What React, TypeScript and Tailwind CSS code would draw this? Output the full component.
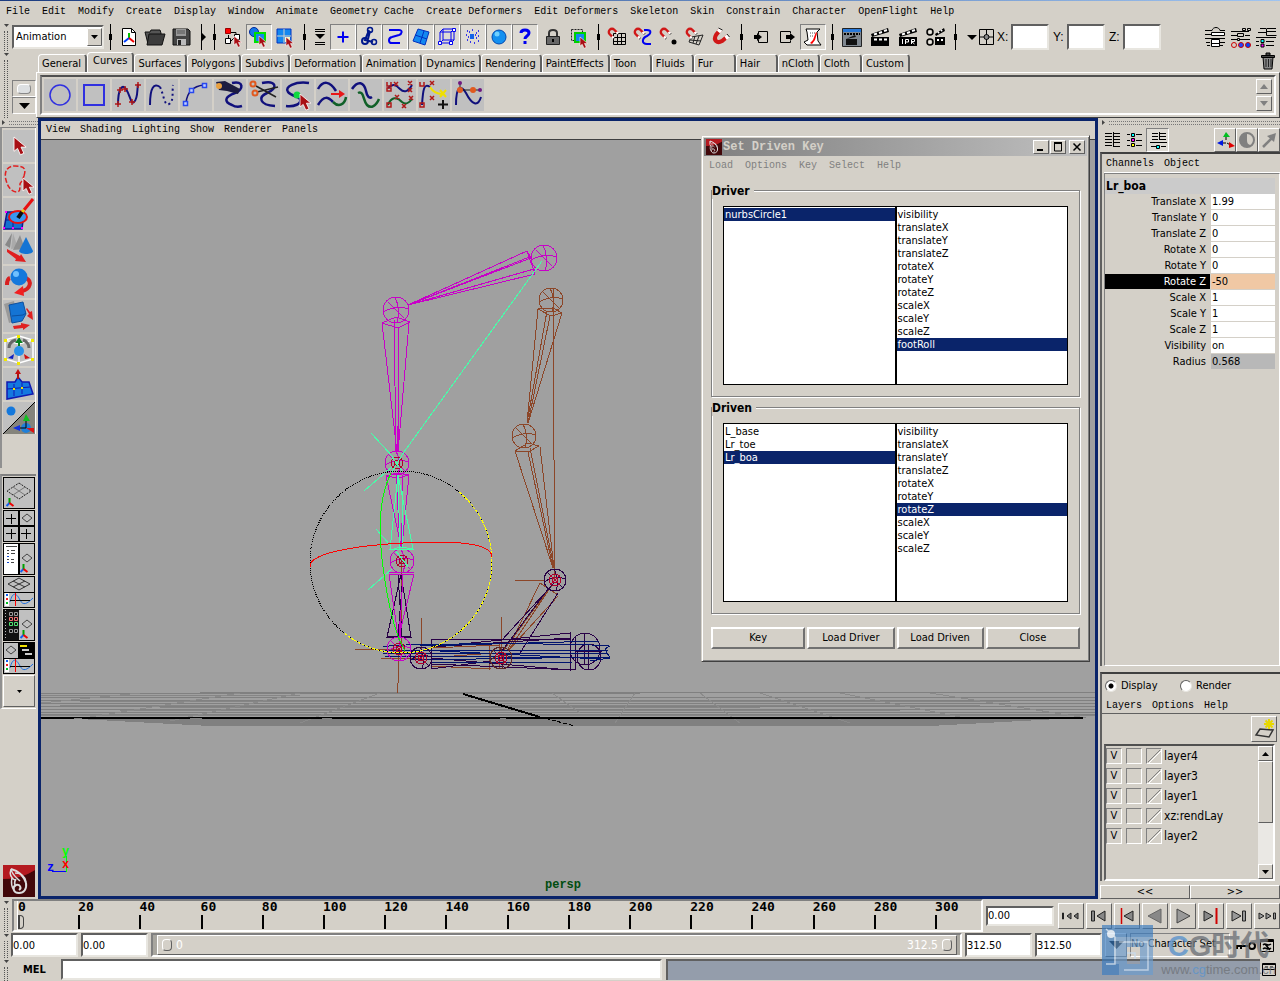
import type { ReactNode } from "react";
import clsx from "clsx";

const sunken = "border border-t-[#808080] border-l-[#808080] border-r-white border-b-white";
const raised = "border border-t-white border-l-white border-r-[#606060] border-b-[#606060]";
const field =
  "border-2 border-t-[#606060] border-l-[#606060] border-r-[#e8e6e0] border-b-[#e8e6e0] bg-white outline-none";
const mono = "font-['Liberation_Mono','DejaVu_Sans_Mono',monospace] text-[10px]";

const mainMenu = [
  "File", "Edit", "Modify", "Create", "Display", "Window", "Animate", "Geometry Cache", "Create Deformers",
  "Edit Deformers", "Skeleton", "Skin", "Constrain", "Character", "OpenFlight", "Help",
];

const shelfTabs = [
  "General", "Curves", "Surfaces", "Polygons", "Subdivs", "Deformation", "Animation", "Dynamics", "Rendering",
  "PaintEffects", "Toon", "Fluids", "Fur", "Hair", "nCloth", "Cloth", "Custom",
];

const attributes = [
  "visibility", "translateX", "translateY", "translateZ", "rotateX", "rotateY", "rotateZ", "scaleX", "scaleY", "scaleZ",
];

const channels = [
  ["Translate X", "1.99"],
  ["Translate Y", "0"],
  ["Translate Z", "0"],
  ["Rotate X", "0"],
  ["Rotate Y", "0"],
  ["Rotate Z", "-50"],
  ["Scale X", "1"],
  ["Scale Y", "1"],
  ["Scale Z", "1"],
  ["Visibility", "on"],
  ["Radius", "0.568"],
];

const layers = ["layer4", "layer3", "layer1", "xz:rendLay", "layer2"];
const frames = [0, 20, 40, 60, 80, 100, 120, 140, 160, 180, 200, 220, 240, 260, 280, 300];

/* ---------- small shared pieces ---------- */

function Svg({ size = 24, children }: { size?: number; children: ReactNode }) {
  return (
    <svg width={size} height={size} viewBox={`0 0 ${size} ${size}`} fill="none" aria-hidden="true" className="shrink-0">
      {children}
    </svg>
  );
}

function Cursor({ x, y, s = 1 }: { x: number; y: number; s?: number }) {
  return (
    <path
      transform={`translate(${x} ${y}) scale(${s})`}
      d="M0 0v13l3.2-2.6 2.6 5.8 3.2-1.4-2.6-5.6h4.6z"
      fill="#a80f14"
      stroke="#fff"
      strokeWidth=".8"
    />
  );
}

function Magnet({ x, y, s = 1 }: { x: number; y: number; s?: number }) {
  return (
    <g transform={`translate(${x} ${y}) scale(${s}) rotate(-45)`} strokeWidth="3">
      <path d="M-4 6V0a4 4 0 0 1 8 0v6" stroke="#d01818" />
      <path d="M-4 4v3M4 4v3" stroke="#fff" />
      <path d="M-5.500 7.500h3M2.500 7.500h3" stroke="#222" strokeWidth="1" />
    </g>
  );
}

function Grip() {
  return (
    <div className="flex w-3 shrink-0 flex-col items-center gap-1 self-stretch pt-0.5">
      <svg width="5" height="3" aria-hidden="true">
        <path d="M0 0h5L2.500 3z" fill="#444" />
      </svg>
      <div className="w-1 flex-1 border-x border-dotted border-[#555]" />
    </div>
  );
}

function SideGrip() {
  return (
    <div className="flex h-[9px] items-center gap-1 pl-0.5">
      <svg width="3" height="5" aria-hidden="true">
        <path d="M0 0v5l3-2.500z" fill="#444" />
      </svg>
      <div className="h-1 flex-1 border-y border-dotted border-[#777]" />
    </div>
  );
}

function Divider({ wide }: { wide?: boolean }) {
  return (
    <svg width={wide ? 14 : 12} height="26" viewBox="0 0 12 26" aria-hidden="true" className="shrink-0" shapeRendering="crispEdges">
      <path d="M6 0h1v26h-1z" />
      <path d="M5 10h3v6h-3z" />
    </svg>
  );
}

function IconButton({ label, pressed, children }: { label: string; pressed?: boolean; children: ReactNode }) {
  return (
    <button
      type="button"
      aria-label={label}
      className={clsx(
        "flex h-[26px] w-[26px] shrink-0 items-center justify-center",
        pressed && "border border-t-[#808080] border-l-[#808080] border-r-white border-b-white bg-[#dedbd4]",
      )}
    >
      <Svg>{children}</Svg>
    </button>
  );
}

function MenuBar({ items, className }: { items: string[]; className?: string }) {
  return (
    <nav className={clsx("flex items-center whitespace-nowrap", mono, className)}>
      {items.map((item) => (
        <button key={item} type="button">
          {item}
        </button>
      ))}
    </nav>
  );
}

/* ---------- status line ---------- */

const clapper = (
  <>
    <path d="M3 12h18v9H3z" fill="#000" />
    <path d="M3 9l17-6 1 4-17 5z" fill="#000" />
    <path d="M6 9.500l3-1M11 8l3-1M16 6l3-1M6 14.500h3M11 14.500h3M16 14.500h3" stroke="#fff" strokeWidth="2" />
  </>
);

function StatusLine() {
  return (
    <div className="flex h-[29px] items-center">
      <Grip />
      <select aria-label="Menu set" defaultValue="Animation" className={clsx(field, "h-6 w-[92px] appearance-none bg-[linear-gradient(#d4d0c8,#d4d0c8)] bg-[length:15px_18px] bg-right bg-no-repeat pl-0.5")}>
        <option>Animation</option>
      </select>
      <svg width="15" height="18" viewBox="0 0 15 18" aria-hidden="true" className="pointer-events-none -ml-[17px] mr-0.5 shrink-0">
        <path d="M.5 17.500V.5h14" stroke="#fff" fill="none" />
        <path d="M.5 17.500h14V.5" stroke="#606060" fill="none" />
        <path d="M4 7h7l-3.500 4z" />
      </svg>
      <Divider />
      <IconButton label="New scene">
        <path d="M5.500 3.500h9l4 4v13h-13z" fill="#fff" stroke="#000" />
        <path d="M14.500 3.500v4h4" stroke="#000" />
        <path d="M12 13V8" stroke="#00c000" strokeWidth="2" />
        <path d="M12 13l-5 4" stroke="#0040ff" strokeWidth="2" />
        <path d="M12 13l5 4" stroke="#f00000" strokeWidth="2" />
      </IconButton>
      <IconButton label="Open scene">
        <path d="M2 7h5l1-2h9l1 3v11H5z" fill="#555" stroke="#111" />
        <path d="M6 9h16l-3 11H4z" fill="#3c3c3c" stroke="#111" />
      </IconButton>
      <IconButton label="Save scene">
        <path d="M4 4h15l2 2v14H4z" fill="#444" stroke="#111" />
        <path d="M7 4h10v7H7z" fill="#999" />
        <path d="M8 14h9v6H8z" fill="#bbb" />
        <path d="M9 15h3v5H9z" fill="#222" />
        <path d="M8 6h8M8 8h8" stroke="#555" />
      </IconButton>
      <svg width="14" height="26" aria-hidden="true" className="shrink-0">
        <path d="M7.500 0v26" stroke="#000" />
        <path d="M8 9l4 4-4 4z" />
      </svg>
      <Divider />
      <IconButton label="Select by hierarchy">
        <path d="M7.500 10v6M9 7.500h6v6M10 16l4-4" stroke="#000" />
        <path d="M4.500 3.500h5v5h-5z" fill="#f00" stroke="#900" />
        <path d="M4.500 13.500h5v5h-5zM13.500 9.500h5v5h-5z" fill="#fff" stroke="#000" />
        <Cursor x={13} y={11} s={0.7} />
      </IconButton>
      <IconButton label="Select by object type" pressed>
        <circle cx="7" cy="7" r="4.500" fill="#1478e8" stroke="#00289c" />
        <path d="M8 8h10v9H8z" fill="#1488f0" stroke="#00e000" strokeWidth="2" />
        <Cursor x={12} y={11} s={0.7} />
      </IconButton>
      <IconButton label="Select by component type">
        <path d="M4 4h14v14H4z" fill="#1488f0" stroke="#0030c0" />
        <path d="M11 4v14M4 11h14" stroke="#d4d0c8" />
        <path d="M12 12h5v5h-5z" fill="#fff8c0" />
        <Cursor x={13} y={12} s={0.7} />
      </IconButton>
      <Divider />
      <svg width="20" height="26" viewBox="0 0 20 26" aria-hidden="true" className="shrink-0">
        <path d="M5 5.500h10M5 7.500h10M5 18.500h10M5 20.500h10" stroke="#000" />
        <path d="M5 10h10l-5 5z" />
      </svg>
      <IconButton label="Select handles" pressed>
        <path d="M12 6.500v11M6.500 12h11" stroke="#0000f0" strokeWidth="2" />
      </IconButton>
      <IconButton label="Select joints" pressed>
        <path d="M12 5l-4 10 8 2M13 6l-2 8" stroke="#00188c" strokeWidth="2" />
        <circle cx="13" cy="5" r="2.500" stroke="#00188c" strokeWidth="1.500" />
        <circle cx="8" cy="16" r="3" stroke="#00188c" strokeWidth="2" />
        <circle cx="17" cy="17" r="2.500" stroke="#00188c" strokeWidth="1.500" />
      </IconButton>
      <IconButton label="Select curves" pressed>
        <path d="M6 5h10c4 0 3 4 0 5l-7 2c-4 1-4 6 0 6h8" stroke="#0000f0" strokeWidth="2" />
      </IconButton>
      <IconButton label="Select surfaces" pressed>
        <path d="M9 4l11 3-4 13-12-4z" fill="#1488f0" stroke="#0030c0" />
        <path d="M15 6l-4 12M6 10l12 4" stroke="#0030c0" />
      </IconButton>
      <IconButton label="Select deformations" pressed>
        <path d="M5 7h11v11H5zM8 4h11v11H8zM5 7l3-3M16 7l3-3M5 18l3-3M16 18l3-3" stroke="#0000f0" />
        <path d="M3.500 16.500h3v3h-3zM14.500 16.500h3v3h-3zM17.500 3.500h3v3h-3z" fill="#fff" stroke="#0000f0" />
      </IconButton>
      <IconButton label="Select dynamics" pressed>
        <path d="M9 9h4v5H9z" fill="#1464e8" />
        <path d="M6 6h1M11 5h1M17 6h1M5 10h1M8 7h1M15 8h1M17 11h1M6 15h1M9 17h1M13 18h1M17 16h1M15 13h1M7 12h1M14 10h1" stroke="#0000f0" strokeWidth="1.500" />
      </IconButton>
      <IconButton label="Select rendering" pressed>
        <circle cx="12" cy="12" r="7" fill="#1490f0" stroke="#0048b0" />
        <circle cx="10" cy="9" r="2.500" fill="#70d0ff" />
      </IconButton>
      <IconButton label="Select miscellaneous" pressed>
        <path d="M8 8c0-4 8-4 8 0 0 3-4 3-4 6" stroke="#0000f0" strokeWidth="3" />
        <path d="M10.500 16h3v3h-3z" fill="#0000f0" />
      </IconButton>
      <div className="w-0.5" />
      <IconButton label="Lock selection">
        <path d="M8 11V8c0-4 8-4 8 0v3" stroke="#333" strokeWidth="2" />
        <path d="M5.500 11.500h13v8h-13z" fill="#666" stroke="#222" />
        <path d="M12 14v3" stroke="#000" strokeWidth="2" />
      </IconButton>
      <IconButton label="Highlight selection mode">
        <path d="M4.500 4.500h11v11h-11z" stroke="#222" strokeDasharray="2 1" />
        <path d="M8 8h10v9H8z" fill="#1488f0" stroke="#00d000" strokeWidth="2" />
        <Cursor x={13} y={12} s={0.7} />
      </IconButton>
      <Divider />
      <IconButton label="Snap to grids">
        <path d="M8.500 8.500h12v11h-12zM12.500 8v12M16.500 8v12M8 12.500h12M8 16.500h12" stroke="#000" />
        <Magnet x={7} y={7} s={0.8} />
      </IconButton>
      <IconButton label="Snap to curves">
        <path d="M13 5h3c5 0 4 4 0 6-5 2-6 8 0 8h4" stroke="#0000f0" strokeWidth="2" />
        <Magnet x={7} y={7} s={0.8} />
      </IconButton>
      <IconButton label="Snap to points">
        <circle cx="17" cy="17" r="2.500" fill="#000" />
        <Magnet x={7} y={7} s={0.8} />
      </IconButton>
      <IconButton label="Snap to view planes">
        <path d="M8 12l12-2-4 10-10-3zM12 11l-2 7M16 11l-3 8M7 15l11 1" stroke="#222" />
        <Magnet x={7} y={7} s={0.8} />
      </IconButton>
      <IconButton label="Make live">
        <path d="M11 5L7 10c-3 5 1 9 6 6l6-5" stroke="#d01818" strokeWidth="4" />
        <path d="M9.500 7l2-2.500M16.500 13l3-2" stroke="#fff" strokeWidth="4" />
        <path d="M9.500 3l4 2M18 9l2.500 3" stroke="#222" />
      </IconButton>
      <Divider wide />
      <IconButton label="Inputs">
        <path d="M9.500 6.500h9v11h-9V15M9.500 9V6.500" stroke="#000" />
        <path d="M5 10h3V8l5 4-5 4v-2H5z" fill="#000" />
      </IconButton>
      <IconButton label="Outputs">
        <path d="M15.500 8V6.500h-10v11h10V16" stroke="#000" />
        <path d="M11 10h4V8l5 4-5 4v-2h-4z" fill="#000" />
      </IconButton>
      <IconButton label="Construction history" pressed>
        <path d="M5 4h14l-3 3 1 9 3 4H6l-3-3 4-2-1-8z" fill="#fff" stroke="#000" />
        <path d="M9 8h5M9 11h4" stroke="#555" strokeDasharray="1 1" />
        <path d="M9 18l3-3 3-8 1 1-2 7-3 4z" fill="#f00" />
      </IconButton>
      <Divider />
      <div className="flex gap-0.5 pl-px">
        <IconButton label="Render view">
          <path d="M2.500 3.500h19v18h-19z" fill="#808890" stroke="#222" />
          <path d="M3 4h18v3H3z" fill="#2878d8" />
          <path d="M4 9h16" stroke="#000" strokeWidth="2" strokeDasharray="2 1" />
          <path d="M6 14h11v6H6zM6 14l9-4 1 2z" fill="#111" />
        </IconButton>
        <IconButton label="Render current frame">{clapper}</IconButton>
        <IconButton label="IPR render">
          <path d="M3 9l17-6 1 4-17 5z" fill="#000" />
          <path d="M3 12h18v9H3z" fill="#000" />
          <path d="M6 9.500l3-1M11 8l3-1M16 6l3-1" stroke="#fff" strokeWidth="2" />
          <path d="M6.500 14v5M9.500 19v-4.500h3v2.500h-3M15.500 19v-4.500h3v2h-3l3 2.500" stroke="#fff" />
        </IconButton>
        <IconButton label="Render settings">
          <circle cx="6" cy="7" r="3" stroke="#000" strokeWidth="1.500" />
          <circle cx="6" cy="17" r="3" stroke="#000" strokeWidth="1.500" />
          <path d="M11 12h10v8H11zM11 9l9-6 1 3-9 5z" fill="#000" />
          <path d="M5.500 7h1M5.500 17h1M13 15h2M17 15h2M14 8l1-1M17 6l1-1" stroke="#fff" strokeWidth="2" />
        </IconButton>
      </div>
      <Divider />
      <svg width="36" height="26" viewBox="0 0 36 26" aria-hidden="true" className="shrink-0">
        <path d="M6 11h10l-5 5z" />
        <path d="M18.500 5.500h14v15h-14zM25.500 6v14M19 13h13" stroke="#000" fill="none" />
        <circle cx="25.500" cy="13" r="2.500" fill="#888" stroke="#000" />
      </svg>
      {["X", "Y", "Z"].map((axis) => (
        <label key={axis} className="flex w-14 shrink-0 items-center">
          <span className="w-3.5 font-['Liberation_Sans',sans-serif] text-[12px]">{axis}:</span>
          <input className={clsx(field, "h-[26px] w-[38px]")} />
        </label>
      ))}
      <div className="ml-auto flex">
        <IconButton label="Attribute editor">
          <path d="M2 5.500h7M17 5.500h5M2 9.500h6M2 13.500h20M3 17.500h4M17 17.500h5M4 20.500h3M17 20.500h3" stroke="#000" />
          <path d="M9 5.500c1-4 7-4 8 0" stroke="#000" />
          <path d="M8.500 7.500h13v3h-13zM8.500 14.500h8v7h-8zM9 18.500h7" stroke="#000" fill="#fff" />
        </IconButton>
        <IconButton label="Tool settings">
          <path d="M13.500 3.500h3v2h-3zM18.500 3.500h3v2h-3zM8.500 8.500h6v3h-6zM2 10.500h6M16 10.500h5M2 6.500h18M8.500 13.500h2v2h-2zM2 14.500h6M11 14.500h10" stroke="#000" />
          <circle cx="5" cy="20" r="2.500" stroke="#c00" />
          <circle cx="12" cy="20" r="2.500" stroke="#c00" fill="#24f" />
          <circle cx="19" cy="20" r="2.500" stroke="#c00" fill="#04f" />
        </IconButton>
        <IconButton label="Channel box">
          <path d="M5 3.500h6M3 7.500h8M11.500 3.500v7h10M12 3.500h9M12 6.500h9M1 12.500h20M11 16.500h8M11 20.500h8M1 16.500h3M1 20.500h3" stroke="#000" />
          <path d="M6 14.500h3v3H6z" fill="#0ff" stroke="#000" />
          <path d="M6 19h3v3H6z" fill="#f0f" stroke="#000" />
        </IconButton>
      </div>
    </div>
  );
}

/* ---------- shelf ---------- */

const navy = "#10107c";

const shelfItems: [string, ReactNode][] = [
  ["NURBS circle", <circle cx="16" cy="16" r="10" stroke="#3030e0" strokeWidth="1.500" />],
  ["NURBS square", <path d="M6 6h20v20H6z" stroke="#3030e0" strokeWidth="2" />],
  [
    "EP curve",
    <>
      <path d="M6 26C6 10 10 4 14 10c4 6 5 16 8 13 4-3 3-12 4-18" stroke={navy} strokeWidth="2" />
      <path d="M3 25h6M6 22v6M5 11h6M8 8v6M17 23h6M20 20v6M23 6h6M26 3v6M10 10h6M13 7v6" stroke="#b01818" strokeWidth="1.500" />
    </>,
  ],
  [
    "Pencil curve",
    <>
      <path d="M4 26C4 8 8 4 14 8" stroke={navy} strokeWidth="2" />
      <path d="M14 8c4 8 4 19 9 17 5-2 3-12 4-19" stroke={navy} strokeWidth="2" strokeDasharray="2 3" />
    </>,
  ],
  [
    "Arc tool",
    <>
      <path d="M6 24c1-11 8-17 18-18" stroke={navy} strokeWidth="1.500" />
      <path d="M3.500 22.500h4v4h-4zM9.500 9.500h4v4h-4zM22.500 4.500h4v4h-4z" fill="#c0d0ff" stroke="#2848f0" strokeWidth="1.500" />
    </>,
  ],
  [
    "Attach curves",
    <>
      <path d="M18 4c12-3 12 7 3 10-11 4-11 9-3 12 3 2 7 2 10 1" stroke={navy} strokeWidth="2.500" />
      <path d="M2 3l9-1 15 8-2 5-11-3-8-1z" fill="#1c1c40" />
      <circle cx="5" cy="7" r="3" fill="#e8a040" />
    </>,
  ],
  [
    "Cut curve",
    <>
      <path d="M14 4c14-3 17 5 5 10-9 4-8 12 8 13" stroke={navy} strokeWidth="2.500" />
      <path d="M8 7l20 11M9 13l21-5" stroke="#222" strokeWidth="1.500" />
      <circle cx="5" cy="5" r="2.500" stroke="#e05a20" strokeWidth="2" />
      <circle cx="7" cy="14" r="2.500" stroke="#e05a20" strokeWidth="2" />
    </>,
  ],
  [
    "Insert knot",
    <>
      <path d="M27 4c-14-2-25 4-21 9 3 4 10 4 12 7 2 5-6 8-14 7" stroke={navy} strokeWidth="2.500" />
      <circle cx="15" cy="16" r="3.500" fill="#10d840" />
      <Cursor x={18} y={15} s={1} />
    </>,
  ],
  [
    "Extend curve",
    <>
      <path d="M2 10c5-9 12-8 18 2M2 26c6-10 10-8 15-3" stroke={navy} strokeWidth="2.500" />
      <path d="M17 23c6 6 12 2 13-5" stroke="#106028" strokeWidth="2.500" />
      <path d="M15 14h8v-3l6 4-6 4v-3h-8z" fill="#e81818" />
    </>,
  ],
  [
    "Offset curve",
    <>
      <path d="M2 10C8 1 14 3 16 12c1 5 3 8 6 6" stroke={navy} strokeWidth="2.500" />
      <path d="M8 14c6-3 5 8 9 12 4 4 9 1 12-6" stroke="#106028" strokeWidth="2.500" />
    </>,
  ],
  [
    "Rebuild curve",
    <>
      <path d="M4 9c5-5 8-3 12 1s8 3 12-4" stroke={navy} strokeWidth="2" />
      <path d="M4 26c3-8 9-9 14-3 4 3 7 1 10-3" stroke="#106028" strokeWidth="2" />
      <path d="M3 3v4h4V3M3 9h4v3H3zM3 24h4v4H3zM10 3l4 4M14 3l-4 4M24 2l4 4M28 2l-4 4M24 9l4 4M28 9l-4 4M11 16l4 4M15 16l-4 4M25 17l4 4M29 17l-4 4M18 25l4 4M22 25l-4 4" stroke="#b01818" strokeWidth="1.500" />
    </>,
  ],
  [
    "Add points",
    <>
      <path d="M4 26C5 10 6 4 12 8" stroke={navy} strokeWidth="2" />
      <path d="M12 8c3 5 7 7 12 7" stroke="#f0e000" strokeWidth="2" />
      <path d="M2 3v4h4V3M2 24h4v4H2zM12 2l4 4M16 2l-4 4M12 17l4 4M16 17l-4 4" stroke="#b01818" strokeWidth="1.500" />
      <path d="M22 11l6 7M28 11l-6 7" stroke="#f0e000" strokeWidth="2" />
      <path d="M25 21v9M20 25.500h10" stroke="#111" strokeWidth="2" />
    </>,
  ],
  [
    "Curve editing",
    <>
      <path d="M4 26C4 6 9 6 14 14c6 12 12 14 15 4" stroke={navy} strokeWidth="2" />
      <path d="M8 11V4M8 11h20" stroke="#222" />
      <circle cx="8" cy="11" r="3" fill="#e05a20" />
      <circle cx="21" cy="11" r="3" fill="#e05a20" />
      <circle cx="8" cy="4" r="2" fill="#701880" />
      <circle cx="28" cy="11" r="2" fill="#701880" />
    </>,
  ],
];

function Shelf() {
  return (
    <div className="flex">
      <Grip />
      <div className="flex w-6 shrink-0 flex-col pt-[29px]">
        <button type="button" aria-label="Shelf tabs" className={clsx(sunken, "flex h-[17px] items-center justify-center")}>
          <span className="h-2.5 w-3.5 rounded-sm border border-[#888] border-t-white border-l-white bg-[#dde0e2]" />
        </button>
        <button type="button" aria-label="Shelf menu" className={clsx(sunken, "flex h-[17px] items-center justify-center")}>
          <svg width="11" height="6" aria-hidden="true">
            <path d="M0 0h11L5.500 6z" />
          </svg>
        </button>
      </div>
      <div className="min-w-0 flex-1">
        <div className="flex h-[21px] items-end pl-0.5">
          {shelfTabs.map((tab) => (
            <button
              key={tab}
              type="button"
              className={clsx(
                "min-w-[42px] rounded-t-sm border-t border-r-2 border-l border-t-white border-r-[#606060] border-l-white text-left",
                tab === "Curves" ? "h-5 px-[5px] pb-1" : "h-[18px] pr-1 pl-[3px]",
              )}
            >
              {tab}
            </button>
          ))}
          <button type="button" aria-label="Delete shelf item" className="mr-1 mb-0.5 ml-auto">
            <svg width="16" height="18" viewBox="0 0 16 18" fill="none" aria-hidden="true">
              <path d="M3 5h10l-1 12H4z" fill="#888" stroke="#000" />
              <path d="M1.500 3.500h13v2h-13zM6 3V1h4v2" fill="#444" stroke="#000" />
              <path d="M6 7v8M8.500 7v8M11 7v8" stroke="#222" />
            </svg>
          </button>
        </div>
        <div className="border border-t-white border-r-[#404040] border-b-[#404040] border-l-white px-[3px] py-0.5">
          <div className="flex border-2 border-t-[#505050] border-r-white border-b-white border-l-[#808080] px-0.5 pt-0.5 pb-0.5">
            <div className="flex flex-1 gap-0.5">
              {shelfItems.map(([name, art]) => (
                <button key={name} type="button" aria-label={name} className="h-8 w-8 bg-[#c0c0c0]">
                  <Svg size={32}>{art}</Svg>
                </button>
              ))}
            </div>
            <div className="flex flex-col justify-between">
              {["Scroll up", "Scroll down"].map((name, i) => (
                <button key={name} type="button" aria-label={name} className={clsx(raised, "flex h-[15px] w-4 items-center justify-center")}>
                  <svg width="8" height="5" aria-hidden="true">
                    <path d={i ? "M0 0h8L4 5z" : "M0 5h8L4 0z"} fill="#808080" />
                  </svg>
                </button>
              ))}
            </div>
          </div>
        </div>
      </div>
    </div>
  );
}

/* ---------- toolbox ---------- */

const plane = "M15 5l12 8-12 8L3 13z";

const tools: [string, ReactNode][] = [
  ["Select tool", <Cursor x={11} y={7} s={1.1} />],
  [
    "Lasso tool",
    <>
      <path d="M21 12c3-9-2-10-9-10C3 2 1 9 3 16c2 8 6 12 11 12 6-1 0-7 5-11z" stroke="#e02020" strokeWidth="1.500" strokeDasharray="5 2" />
      <Cursor x={20} y={14} s={1} />
    </>,
  ],
  [
    "Paint selection tool",
    <>
      <path d="M4 14h17l-2 17H1z" fill="#1470d0" stroke="#101890" strokeWidth="1.500" />
      <path d="M10 22v9M2 22h17" stroke="#101890" />
      <ellipse cx="15" cy="19" rx="9" ry="6" stroke="#e81010" strokeWidth="2" fill="#3898f0" />
      <path d="M30 1l-9 11" stroke="#e81010" strokeWidth="3" />
      <path d="M21 12l-2 2" stroke="#f0d000" strokeWidth="3" />
      <path d="M19 14l-4 6" stroke="#111" strokeWidth="4" />
      <path d="M0 29h2v2H0zM9 29h2v2H9zM18 29h2v2h-2zM2 13h2v2H2z" fill="#f0f" />
    </>,
  ],
  [
    "Move tool",
    <>
      <path d="M9 1L2 13l5 3z" fill="#888" />
      <path d="M10 1l5 15-7 1z" fill="#aaa" />
      <path d="M17 3l5 14-12 1z" fill="#909090" />
      <path d="M23 5l7 14c0 4-13 4-14 0z" fill="#1474d4" />
      <path d="M4 17l13 7 1-2 5 8-11-1 1-2L4 20z" fill="#e02020" />
    </>,
  ],
  [
    "Rotate tool",
    <>
      <path d="M7 12c-3 1-3 4-3 7M23 12c6 3 5 11-4 13" stroke="#d82020" strokeWidth="4" />
      <path d="M20 20l-9 7 10 3z" fill="#f02020" />
      <circle cx="16" cy="11" r="8.500" fill="#1478dc" />
      <circle cx="13" cy="8" r="3" fill="#70c0ff" />
    </>,
  ],
  [
    "Scale tool",
    <>
      <path d="M1 4l10-3 3 19-8 3z" fill="#999" />
      <path d="M6 5l14-3 3 12-4 7-10 2z" fill="#1474d4" stroke="#0c50a0" />
      <path d="M9 16l11-1 3-2" stroke="#0c50a0" />
      <path d="M24 8l3 4 2-1 1 9-6-4 2-2-3-5zM10 26l8-1v-2l9 2-7 5v-2l-9 1z" fill="#e02020" />
    </>,
  ],
  [
    "Universal manipulator",
    <>
      <path d="M2 6l14-4 14 4v19l-14 4-14-4zM16 2v27M2 6l14 4 14-4" stroke="#fff" strokeWidth="1.500" />
      <path d="M6 14c0-4 3-7 7-8M26 14c0-4-3-7-6-8" stroke="#666" strokeWidth="3" />
      <circle cx="16" cy="17" r="5" fill="#2890e8" />
      <path d="M16 12V5l-2 3h4l-2-3" stroke="#088020" strokeWidth="2" />
      <path d="M11 20l-6 4 5 1z" fill="#1020c0" />
      <path d="M21 20l6 4-5 1z" fill="#d01010" />
      <path d="M1 5h3v3H1zM14 1h3v3h-3zM28 5h3v3h-3zM1 24h3v3H1zM14 28h3v3h-3zM28 24h3v3h-3z" fill="#f0e800" />
    </>,
  ],
  [
    "Soft modification tool",
    <>
      <path d="M4 14h8l3-5 4 5h7l4 12-26 5z" fill="#1478e0" stroke="#1018b0" strokeWidth="1.500" />
      <path d="M11 16v12M19 15v11M4 21l23-2" stroke="#1018b0" />
      <path d="M15 11V5" stroke="#b01010" strokeWidth="2" />
      <path d="M12 6l3-5 3 5z" fill="#c01010" />
      <path d="M10 20h2v2h-2zM18 19h2v2h-2z" fill="#f0e800" />
    </>,
  ],
  [
    "Show manipulator",
    <>
      <path d="M32 0v32H0z" fill="#85847c" />
      <path d="M32 0L0 32" stroke="#000" />
      <circle cx="8" cy="9" r="4.500" fill="#1478dc" />
      <circle cx="23" cy="26" r="5" fill="#2080d8" />
      <path d="M23 26V14M23 26H13" stroke="#000" />
      <path d="M20 19l3-7 4 7z" fill="#10c020" />
      <path d="M17 23v6l-7-3z" fill="#1030e0" />
      <path d="M23 26l8 5v-5z" fill="#e01010" />
    </>,
  ],
];

const axes = (
  <>
    <path d="M5.500 26v-6" stroke="#00a000" strokeWidth="2" />
    <path d="M5.500 25l-3 3" stroke="#1060f0" strokeWidth="2" />
    <path d="M5.500 25l4 3" stroke="#f00000" strokeWidth="2" />
  </>
);

const graph = (
  <>
    <path d="M1 16h4v13H1z" fill="#fff" />
    <path d="M2 18h2" stroke="#1060f0" strokeWidth="2" />
    <path d="M2 22h2" stroke="#f02020" strokeWidth="2" />
    <path d="M2 26h2" stroke="#00c020" strokeWidth="2" />
    <path d="M6 25c3-12 7-8 10-2s7 4 13-2" stroke="#2070e0" />
    <path d="M6 23.500h20" stroke="#000" />
    <path d="M11.500 16v13" stroke="#f00" />
    <path d="M0 15.500h30" stroke="#000" />
  </>
);

const layouts: [string, ReactNode][] = [
  [
    "Single perspective view",
    <>
      <path d={plane} stroke="#222" strokeDasharray="2 1" />
      <path d="M9 9l12 8M21 9L9 17" stroke="#777" />
      {axes}
    </>,
  ],
  [
    "Four view",
    <>
      <path d="M15 0v30M0 15h30" stroke="#000" strokeWidth="2" />
      <path d="M7.500 3v10M2 7.500h10M7.500 18v10M2 22.500h10M22.500 18v10M17 22.500h10" stroke="#000" />
      <path d="M23 3l5 4-5 4-5-4z" stroke="#444" />
    </>,
  ],
  [
    "Outliner and perspective",
    <>
      <path d="M0 0h14v30H0z" fill="#fff" />
      <path d="M15 0v30" stroke="#000" strokeWidth="2" />
      <path d="M2 2.500h11M3 6.500h2M7 6.500h4M3 9.500h2M7 9.500h4M3 15.500h2M7 15.500h3M7 18.500h3" stroke="#444" />
      <path d="M3 12.500h2M3 18.500h2" stroke="#1048d0" />
      <path d="M23 10l5 4-5 4-5-4z" stroke="#444" />
      <g transform="translate(14 0)">{axes}</g>
    </>,
  ],
  [
    "Perspective and graph editor",
    <>
      <path d="M15 1l11 6-11 6L4 7zM9 4l12 6M21 4L9 10" stroke="#333" />
      {graph}
    </>,
  ],
  [
    "Hypershade and perspective",
    <>
      <path d="M0 0h15v30H0z" fill="#111" />
      <path d="M1.500 0v30" stroke="#bbb" strokeDasharray="1 2" />
      <path d="M5.500 2.500h3v3h-3zM10.500 2.500h3v3h-3zM5.500 19.500h3v3h-3zM10.500 19.500h3v3h-3z" stroke="#999" />
      <path d="M5.500 7.500h3v3h-3zM10.500 7.500h3v3h-3z" stroke="#f07070" />
      <path d="M5.500 12.500h3v3h-3zM10.500 12.500h3v3h-3z" stroke="#50e070" />
      <path d="M23 10l5 4-5 4-5-4z" stroke="#444" />
      <g transform="translate(14 0)">{axes}</g>
    </>,
  ],
  [
    "Perspective, hypergraph and graph editor",
    <>
      <path d="M7 3l5 4-5 4-5-4z" stroke="#444" />
      <path d="M14 0h16v15H14z" fill="#000" />
      <path d="M16 3h7" stroke="#f0e000" strokeWidth="2" />
      <path d="M18 7h7M21 11h7" stroke="#ccc" strokeWidth="2" />
      {graph}
    </>,
  ],
];

function MayaLogo({ size }: { size: number }) {
  return (
    <svg width={size} height={size} viewBox="0 0 32 32" fill="none" aria-hidden="true" className="shrink-0">
      <path d="M0 0h32v32H0z" fill="#8c1014" />
      <path d="M0 14Q18 14 32 5v27H0z" fill="#42080a" />
      <path d="M0 0h32v5Q18 14 0 14z" fill="#b41a20" />
      <path d="M8 4c8 2 13 8 15 14 1 6-2 10-7 10-6 0-7-6-3-8 4-1 6 3 3 5" stroke="#ddd" strokeWidth="2" />
      <path d="M8 4c-2 6 0 9 4 11M8 4c1 6 5 8 9 12M12 8c8 0 10 4 11 9M9 12c-1 6-1 10 2 13M13 14c-2 3-2 4-1 6" stroke="#ddd" strokeWidth="1.500" />
    </svg>
  );
}

function Toolbox() {
  return (
    <aside className="flex w-[38px] shrink-0 flex-col pb-0.5">
      <SideGrip />
      <div className="mr-0.5 border-t border-l-2 border-t-[#808080] border-l-[#909090] pb-[34px]">
        <div className="flex flex-col gap-0.5 border-r border-white pt-0.5 pl-px">
          {tools.map(([name, art]) => (
            <button key={name} type="button" aria-label={name} className="h-8 w-8 bg-[#c0c0c0]">
              <Svg size={32}>{art}</Svg>
            </button>
          ))}
        </div>
      </div>
      <div className="mt-[6px] mr-0.5 flex flex-col gap-px border-t-2 border-b border-l-2 border-t-[#808080] border-b-white border-l-[#909090] py-px pl-px">
        {layouts.map(([name, art]) => (
          <button key={name} type="button" aria-label={name} className="h-8 w-8 border border-black bg-[#c0c0c0]">
            <Svg size={30}>{art}</Svg>
          </button>
        ))}
        <button type="button" aria-label="More layouts" className={clsx(raised, "flex h-8 w-8 items-center justify-center")}>
          <svg width="5" height="3" aria-hidden="true">
            <path d="M0 0h5L2.500 3z" />
          </svg>
        </button>
      </div>
      <div className="mt-auto pl-[3px]">
        <MayaLogo size={32} />
      </div>
    </aside>
  );
}

/* ---------- viewport ---------- */

function Joint({ x, y, r, color, core }: { x: number; y: number; r: number; color: string; core?: boolean }) {
  return (
    <g stroke={color}>
      <circle cx={x} cy={y} r={r} />
      <path d={`M${x - r} ${y + 2}Q${x} ${y - 5} ${x + r} ${y - 1}M${x - 1} ${y - r}Q${x + 5} ${y} ${x + 1} ${y + r}M${x - 8} ${y - 8}L${x + 8} ${y + 8}`} />
      {core && (
        <g stroke="#b0002c">
          <circle cx={x} cy={y} r="6" />
          <circle cx={x} cy={y} r="3" />
          <path d={`M${x - 4} ${y - 4}l8 8M${x + 4} ${y - 4}l-8 8`} />
        </g>
      )}
    </g>
  );
}

function Scene() {
  return (
    <svg
      viewBox="41 139 1054 757"
      preserveAspectRatio="xMinYMin slice"
      fill="none"
      shapeRendering="crispEdges"
      role="img"
      aria-label="Leg rig in the perspective view"
      className="absolute inset-0 h-full w-full"
    >
      {/* ground grid */}
      <path d="M41 716H1095L930 725H210z" fill="#808080" />
      <path
        d="M41 692.500H640M200 691.500H1095M41 696.500H1095M41 699.500H1095M41 702.500H1095M41 705.500H1095M41 708.500H1095M41 711.500H1095M41 713.500H1095"
        stroke="#808080"
      />
      <path d="M41 714.500H1095M60 704.500H420M500 704.500H980M120 709.500H900M80 700.500H560M600 700.500H1010M160 706.500H760M41 694.500H300" stroke="#858585" />
      <path d="M140 692L41 702M240 692L90 716M300 692L170 720M380 692l-80 30M635 692l-20 30M700 692l40 30M760 692l90 30M840 692l120 24M930 692l150 24M552 692l28 20" stroke="#8a8a8a" />
      <path d="M41 716.500H1083" stroke="#000" strokeWidth="2" />
      <path d="M74 717h8M190 717h12M322 717h10M500 717h6" stroke="#808080" />
      <path d="M463 693l77 23" stroke="#000" strokeWidth="2" />
      <path d="M540 716l35 9" stroke="#000" strokeDasharray="4 2" />

      {/* inverse kinematics leg */}
      <g stroke="#8c4628">
        <Joint x={551} y={299} r={12} color="#8c4628" />
        <Joint x={524} y={435} r={12} color="#8c4628" />
        <path d="M538 308l13 7 11-3-9-5zM538 308l-11 114M547 310l-20 112M550 315l-22 107M562 312l-34 110M553 288v50l2 240" />
        <path d="M515 450l13 1 11-6-11-3zM515 450l38 117M528 451l25 116M530 447l24 120M540 446l14 121" />
        <path d="M515 579.500h30M540 582l18 12M540 582l-32 66M558 595l-50 55M552 584l-44 66M549 588l-46 62" />
        <path d="M421.500 617v40M501.500 616v40M355 648.500h44M381 657.500h40M398 650v32l-1 10M401 560v86" />
        <path d="M431 647l68-3v24M431 665l60 3M489 645v24M440 656l55-4" />
      </g>

      {/* foot bones */}
      <g stroke="#280046">
        <path d="M432 646l138-14v37l-139-12M575 635v34M570 638h-139v30l60-8M431 668v-22l139-9M575 669l-143-6" />
        <path d="M501 640l53-58M520 652l38-60M548 588l-46 62" />
        <ellipse cx="585" cy="648" rx="15" ry="16" />
        <ellipse cx="589" cy="656" rx="12" ry="13" />
        <path d="M584.500 632v31M588.500 644v25M575 650h27" strokeWidth="1.500" />
        <path d="M401 573l-14 63h24zM403 573l-5 62M398 573l4 62" />
        <path d="M387 636h24" strokeWidth="2" />
      </g>
      <g stroke="#00146e">
        <path d="M383 646c10-4 190-4 226-1M385 649l223 1M383 652h225M385 655l224 2M410 659l199-3M432 662l140-1M440 650l160 8M420 645l180-5" />
        <path d="M610 645l-5 3 5 9-20 3" />
      </g>
      <Joint x={421} y={657} r={11} color="#280046" core />
      <Joint x={501} y={657} r={11} color="#5a2828" core />
      <Joint x={555} y={579} r={11} color="#280046" core />

      {/* forward kinematics leg */}
      <g stroke="#c800c8">
        <path d="M408 304l119-54 4 7zM408 304l126-36 1 5zM527 250l8 23M408 304l124-49" />
        <path d="M382 322l14-6 14 5-12 6zM382 322l15 129M394 317l2 134M398 327v124M409 322l-11 129" />
        <path d="M386 475l11-3 12 2-11 3zM386 475l15 70M396 473l4 72M402 474v71M409 474l-7 71" />
        <path d="M389 573h25M389 573l9 62M414 573l-15 62M389 571h25M403 573l-4 72" />
        <path d="M397.500 425v26M401.500 522v24M399.500 620v16" strokeWidth="2" />
      </g>
      <Joint x={544} y={257} r={13} color="#c800c8" />
      <Joint x={396} y={309} r={13} color="#c800c8" />
      <Joint x={397} y={462} r={12} color="#c800c8" core />
      <Joint x={402} y={560} r={12} color="#c800c8" core />
      <Joint x={399} y={648} r={12} color="#c800c8" core />

      {/* ik handles */}
      <g stroke="#46ffaa">
        <path d="M542 260L404 451M371 432l22 24M364 490l28-24M376 528l14 16M368 589l24-21" />
        <path d="M398 474l-8 74h23l-15-74M398 474l2 74M402 490v56M390 549l11-3 12 2M404 451l-12 20M392 456l10 14M396 550l12 16" />
      </g>

      {/* rotate manipulator */}
      <circle cx="401" cy="561" r="91" stroke="#000" strokeDasharray="1 1" />
      <path d="M459.500 491.300A91 91 0 0 1 492 561A91 91 0 0 1 345 632.700" stroke="#ff0" strokeDasharray="3 1" />
      <path d="M310 566c-3-16 64-25 135-25 35 1 47 7 47 15" stroke="#f00" />
      <path d="M391 472c-16 32-11 77-6 108 4 26 10 53 20 70" stroke="#0f0" />

      {/* view axis */}
      <path d="M52 870.500h14" stroke="#00f" />
      <path d="M66.500 855v16" stroke="#0f0" />
      <g fontFamily="'Liberation Mono', monospace" fontSize="12" fontWeight="700">
        <text x="62" y="854" fill="#0f0">y</text>
        <text x="62" y="867" fill="#f00">x</text>
        <text x="47" y="870" fill="#00f">z</text>
        <text x="545" y="887" fill="#004d10">persp</text>
      </g>
    </svg>
  );
}

function AttributeList({ label, items, selected }: { label: string; items: string[]; selected: string }) {
  return (
    <ul role="listbox" aria-label={label} className="flex-1 bg-white pt-px">
      {items.map((item) => (
        <li
          key={item}
          role="option"
          aria-selected={item === selected}
          className={clsx("h-[13px] pl-px leading-[13px]", item === selected && "bg-[#0a246a] text-white")}
        >
          {item}
        </li>
      ))}
    </ul>
  );
}

function KeyGroup({ title, nodes, node, attrs, attr }: { title: string; nodes: string[]; node: string; attrs: string[]; attr: string }) {
  return (
    <section className="relative border border-[#808080] p-[11px] pt-[15px] shadow-[inset_1px_1px_0_#fff,1px_1px_0_#fff]">
      <h2 className="absolute -top-2 left-0 bg-[#d4d0c8] pr-1 text-[12px] leading-4 font-bold">{title}</h2>
      <div className="flex h-[179px] gap-0.5 border border-black bg-black">
        <AttributeList label={`${title} nodes`} items={nodes} selected={node} />
        <AttributeList label={`${title} attributes`} items={attrs} selected={attr} />
      </div>
    </section>
  );
}

function SetDrivenKey() {
  return (
    <div
      role="dialog"
      aria-label="Set Driven Key"
      className="absolute top-[14px] left-[660px] w-[389px] border border-t-[#d4d0c8] border-r-[#404040] border-b-[#404040] border-l-[#d4d0c8] bg-[#d4d0c8] p-0.5 shadow-[inset_1px_1px_0_#fff,inset_-1px_-1px_0_#808080]"
    >
      <div className="flex h-[18px] items-center gap-px bg-gradient-to-r from-[#808080] to-[#c0c0c0] px-0.5">
        <MayaLogo size={16} />
        <span className="flex-1 font-['Liberation_Mono',monospace] text-[12px] font-bold text-[#d4d0c8]">Set Driven Key</span>
        {["Minimize", "Maximize", "Close window"].map((name, i) => (
          <button
            key={name}
            type="button"
            aria-label={name}
            className={clsx(raised, "flex h-3.5 w-4 items-center justify-center bg-[#d4d0c8]", i === 2 && "ml-0.5")}
          >
            <svg width="10" height="10" fill="none" stroke="#000" aria-hidden="true">
              {i === 0 && <path d="M1 8h6" strokeWidth="2" />}
              {i === 1 && <path d="M1 1.500h8M1.500 2v7h7V2M1 .5h8" />}
              {i === 2 && <path d="M1.500 1.500l7 7M8.500 1.500l-7 7" strokeWidth="1.500" />}
            </svg>
          </button>
        ))}
      </div>
      <MenuBar items={["Load", "Options", "Key", "Select", "Help"]} className="h-5 gap-3 pl-[5px] text-[#808080]" />
      <div className="flex flex-col gap-[10px] px-[7px] pt-[14px] pb-[10px]">
        <KeyGroup title="Driver" nodes={["nurbsCircle1"]} node="nurbsCircle1" attrs={[...attributes, "footRoll"]} attr="footRoll" />
        <KeyGroup title="Driven" nodes={["L_base", "Lr_toe", "Lr_boa"]} node="Lr_boa" attrs={attributes} attr="rotateZ" />
        <div className="mt-[3px] grid grid-cols-[94fr_87fr_87fr_94fr] gap-0.5">
          {["Key", "Load Driver", "Load Driven", "Close"].map((name) => (
            <button key={name} type="button" className="h-[22px] border-2 border-t-white border-r-[#707070] border-b-[#707070] border-l-white">
              {name}
            </button>
          ))}
        </div>
      </div>
    </div>
  );
}

function Viewport() {
  return (
    <main className="relative mr-0.5 flex min-w-0 flex-1 flex-col border-[3px] border-[#0a246a]">
      <MenuBar items={["View", "Shading", "Lighting", "Show", "Renderer", "Panels"]} className="h-[19px] gap-2.5 border-b border-[#404040] pl-[5px]" />
      <div className="relative min-h-[720px] flex-1 overflow-hidden bg-[#a0a0a0]">
        <Scene />
      </div>
      <SetDrivenKey />
    </main>
  );
}

/* ---------- channel box and layers ---------- */

function ChannelBox() {
  return (
    <section className="flex flex-1 flex-col border-t-2 border-l-2 border-t-[#404040] border-l-[#606060] pl-0.5">
      <MenuBar items={["Channels", "Object"]} className="h-[19px] gap-2.5 pl-0.5" />
      <div className="flex-1 border border-t-[#808080] border-r-white border-b-white border-l-[#808080] pt-1 pr-1 shadow-[0_-1px_0_#fff]">
        <h2 className="h-4 bg-[#cbcbcb] pl-px text-[12px] leading-4 font-bold">Lr_boa</h2>
        {channels.map(([name, value]) => {
          const active = name === "Rotate Z";
          return (
            <label key={name} className="flex h-4 pb-px leading-[15px]">
              <span className={clsx("flex-1 pr-1 text-right", active && "bg-black text-white")}>{name}</span>
              <input
                defaultValue={value}
                className={clsx(
                  "ml-px h-[15px] w-16 pl-px outline-none",
                  active ? "bg-[#f0c8a4]" : name === "Radius" ? "bg-[#b8b8b8]" : "bg-white",
                )}
              />
            </label>
          );
        })}
      </div>
    </section>
  );
}

function LayerEditor() {
  return (
    <section className="mt-1.5 border-t-2 border-l-2 border-t-[#404040] border-l-[#606060]">
      <div className="flex h-6 items-center pl-[3px]">
        {["Display", "Render"].map((name, i) => (
          <label key={name} className="flex w-[75px] items-center gap-1">
            <input
              type="radio"
              name="layerMode"
              defaultChecked={i === 0}
              className="h-3 w-3 appearance-none rounded-full border border-t-[#606060] border-r-[#e8e6e0] border-b-[#e8e6e0] border-l-[#606060] bg-white checked:bg-[radial-gradient(#000_2px,#fff_3px)]"
            />
            {name}
          </label>
        ))}
      </div>
      <MenuBar items={["Layers", "Options", "Help"]} className="h-4 gap-2.5 border-b border-[#606060] pl-1" />
      <div className="flex h-[30px] items-center justify-end pr-[3px]">
        <button type="button" aria-label="Create new layer" className={clsx(raised, "h-[26px] w-[26px]")}>
          <Svg>
            <path d="M8 12l13 1-4 7-13-2z" stroke="#333" strokeWidth="1.500" />
            <path d="M17 2v10M12 7h10M13.500 3.500l7 7M20.500 3.500l-7 7" stroke="#e8d800" strokeWidth="2" />
          </Svg>
        </button>
      </div>
      <div className="mr-[5px] ml-0.5 flex h-[137px] border-2 border-t-[#505050] border-r-white border-b-white border-l-[#606060]">
        <ul className="flex-1">
          {layers.map((layer) => (
            <li key={layer} className="flex h-5 items-center gap-1 text-[12px]">
              <button type="button" aria-label={`${layer} visibility`} className={clsx(sunken, "h-4 w-4 text-[11px] leading-[14px]")}>
                V
              </button>
              <button type="button" aria-label={`${layer} mode`} className={clsx(sunken, "h-4 w-4")} />
              <button type="button" aria-label={`${layer} colour`} className={clsx(sunken, "h-4 w-4")}>
                <svg width="14" height="14" aria-hidden="true">
                  <path d="M1 13L13 1" stroke="#808080" />
                  <path d="M2 14L14 2" stroke="#fff" />
                </svg>
              </button>
              <span className="-ml-0.5">{layer}</span>
            </li>
          ))}
        </ul>
        <div className="flex w-[15px] flex-col bg-[#eae8e4]">
          <button type="button" aria-label="Scroll layers up" className={clsx(raised, "flex h-[15px] items-center justify-center bg-[#d4d0c8]")}>
            <svg width="7" height="4" aria-hidden="true"><path d="M0 4h7L3.500 0z" /></svg>
          </button>
          <div className={clsx(raised, "h-[62px] bg-[#d4d0c8]")} />
          <button type="button" aria-label="Scroll layers down" className={clsx(raised, "mt-auto flex h-[15px] items-center justify-center bg-[#d4d0c8]")}>
            <svg width="7" height="4" aria-hidden="true"><path d="M0 0h7L3.500 4z" /></svg>
          </button>
        </div>
      </div>
    </section>
  );
}

function SidePanel() {
  return (
    <aside className="flex w-[180px] shrink-0 flex-col">
      <SideGrip />
      <div className="flex h-[25px] items-center">
        <button type="button" aria-label="Channel box only" className="w-[23px]">
          <Svg>
            <path d="M5 5.500h7M5 8.500h7M5 11.500h7M5 14.500h7M5 17.500h7M13.500 4v15M14 5.500h6M14 8.500h6M14 11.500h6M14 14.500h6M14 18.500h6" stroke="#000" />
          </Svg>
        </button>
        <button type="button" aria-label="Layer editor only" className="w-[23px]">
          <Svg>
            <path d="M4 6.500h3M4 12.500h3M4 17.500h3M13 6.500h6M13 12.500h6M13 17.500h6" stroke="#000" />
            <path d="M8.500 5.500h3v3h-3z" fill="#0ff" stroke="#000" />
            <path d="M8.500 10.500h3v3h-3z" fill="#f0f" stroke="#000" />
            <path d="M8.500 15.500h3v3h-3z" fill="#ff0" stroke="#000" />
          </Svg>
        </button>
        <button type="button" aria-label="Channel box and layer editor" className={clsx(sunken, "h-6 w-[23px] bg-[#dedbd4]")}>
          <Svg>
            <path d="M5 4.500h6M5 7.500h6M5 10.500h6M12.500 3v8M13 4.500h6M13 7.500h6M13 10.500h6M3 13.500h17M4 17.500h5M14 17.500h5" stroke="#000" />
            <path d="M9.500 16.500h3v3h-3z" fill="#0ff" stroke="#000" />
          </Svg>
        </button>
        <div className="ml-auto flex">
          <button type="button" aria-label="Manipulator" className={clsx(raised, "h-6 w-[22px]")}>
            <Svg>
              <path d="M11 11V5M11 14H5M12 14l5 3" stroke="#000" />
              <path d="M8 8l3-5 4 5z" fill="#00c020" />
              <path d="M8 11v6l-6-3z" fill="#0018e0" />
              <path d="M14 13l6 4-6 2z" fill="#e00000" />
            </Svg>
          </button>
          <button type="button" aria-label="Speed" className={clsx(raised, "h-6 w-[22px]")}>
            <Svg>
              <circle cx="10" cy="11" r="7" stroke="#808080" strokeWidth="2" />
              <path d="M10 11V4a7 7 0 0 0-6 10c3 5 9 5 11 2-4 0-5-2-5-5z" fill="#808080" />
            </Svg>
          </button>
          <button type="button" aria-label="Hyperbolic" className={clsx(raised, "h-6 w-[22px]")}>
            <Svg>
              <path d="M4 18l10-10" stroke="#808080" strokeWidth="2.500" />
              <path d="M17 4l-2 9-7-6z" fill="#808080" />
            </Svg>
          </button>
        </div>
      </div>
      <ChannelBox />
      <LayerEditor />
      <div className="mt-1 flex">
        <button type="button" className={clsx(raised, "h-[14px] flex-1 leading-3")}>&lt;&lt;</button>
        <button type="button" className={clsx(raised, "h-[14px] flex-1 leading-3")}>&gt;&gt;</button>
      </div>
    </aside>
  );
}

/* ---------- time slider, range slider, command line ---------- */

const playback: [string, ReactNode][] = [
  ["Go to start", <path d="M3.500 9h1v6h-1zM12 9l-4 3 4 3zM19 9l-4 3 4 3z" fill="#777" stroke="#222" />],
  ["Step back frame", <path d="M4.500 7h3v10h-3zM18 7l-8 5 8 5z" fill="#888" stroke="#222" />],
  [
    "Step back key",
    <>
      <path d="M6.500 4v16" stroke="#d00000" strokeWidth="1.500" />
      <path d="M18 7l-9 5 9 5z" fill="#888" stroke="#222" />
    </>,
  ],
  ["Play backwards", <path d="M18 5v14L5 12z" fill="#888" stroke="#666" />],
  ["Play forwards", <path d="M6 5v14l13-7z" fill="#999" stroke="#444" />],
  [
    "Step forward key",
    <>
      <path d="M17.500 4v16" stroke="#d00000" strokeWidth="2" />
      <path d="M5 7v10l9-5z" fill="#888" stroke="#222" />
    </>,
  ],
  ["Step forward frame", <path d="M5 7v10l9-5zM15.500 7h3v10h-3z" fill="#999" stroke="#222" />],
  ["Go to end", <path d="M4 9v6l5-3zM11 9v6l5-3zM18.500 9h2v6h-2z" fill="#999" stroke="#222" />],
];

function TimeSlider() {
  return (
    <div className="flex h-[33px]">
      <Grip />
      <div className="flex min-w-0 flex-1 border-2 border-t-[#808080] border-r-white border-b-white border-l-[#808080] pl-[3px]">
        <ol className="grid flex-1 grid-cols-[repeat(15,4fr)_3fr] font-['DejaVu_Sans_Mono',monospace] text-[13px] leading-[11px] font-bold">
          {frames.map((frame) => (
            <li
              key={frame}
              className={clsx("flex flex-col justify-between pb-px", frame === 0 && "border-l border-white")}
            >
              <span>{frame}</span>
              {frame === 0 ? (
                <span className="h-3.5 w-1.5 rounded-r-sm border border-l-2 border-[#444]" />
              ) : (
                <span className="h-3.5 w-0.5 bg-black" />
              )}
            </li>
          ))}
        </ol>
      </div>
      <div className="flex items-center gap-0.5 pl-[3px]">
        <input aria-label="Current time" defaultValue="0.00" className={clsx(field, "mr-0.5 h-5 w-[68px]")} />
        {playback.map(([name, art]) => (
          <button key={name} type="button" aria-label={name} className={clsx(raised, "h-[26px] w-[26px]")}>
            <Svg>{art}</Svg>
          </button>
        ))}
      </div>
    </div>
  );
}

function RangeSlider() {
  return (
    <div className="flex h-[26px] items-center gap-[3px]">
      <div className="-mr-1 flex self-stretch">
        <Grip />
      </div>
      <input aria-label="Animation start" defaultValue="0.00" className={clsx(field, "h-6 w-[67px]")} />
      <input aria-label="Playback start" defaultValue="0.00" className={clsx(field, "h-6 w-[67px]")} />
      <div className="h-6 min-w-0 flex-1 border-2 border-t-[#808080] border-r-white border-b-white border-l-[#808080] bg-[#a8a69f] pr-[3px] pl-1">
        <div className={clsx(raised, "flex h-full items-center justify-between bg-[#d4d0c8] px-1 text-[12px] text-white")}>
          <span className="flex items-center gap-1">
            <span className={clsx(raised, "h-3 w-2.5 rounded-sm")} />0
          </span>
          <span className="flex items-center gap-1">
            312.5
            <span className={clsx(raised, "h-3 w-2.5 rounded-sm")} />
          </span>
        </div>
      </div>
      <input aria-label="Playback end" defaultValue="312.50" className={clsx(field, "h-6 w-[67px]")} />
      <input aria-label="Animation end" defaultValue="312.50" className={clsx(field, "h-6 w-[67px]")} />
      <button type="button" aria-label="Character set menu" className={clsx(raised, "flex h-6 w-[22px] items-center justify-center")}>
        <svg width="15" height="8" aria-hidden="true">
          <path d="M0 0h15L7.500 8z" />
        </svg>
      </button>
      <span className={clsx(sunken, "h-6 w-[100px] leading-5 whitespace-nowrap")}>No Character Set</span>
      <button type="button" aria-label="Auto keyframe" className="w-6">
        <Svg>
          <circle cx="19" cy="13" r="3" stroke="#000" strokeWidth="2" />
          <path d="M16 13H4v3M8 13v3" stroke="#000" strokeWidth="2" />
        </Svg>
      </button>
      <button type="button" aria-label="Animation preferences" className="mr-1 w-4">
        <svg width="15" height="15" fill="none" stroke="#000" aria-hidden="true">
          <path d="M.5 1.500h13v12H.5zM1 2.500h12M1 3.500h12" />
          <path d="M3 7c3-3 4 2 8-1M3 11c3-3 4 2 8-1M5 6l5 6" strokeWidth="1.500" />
        </svg>
      </button>
    </div>
  );
}

function CommandLine() {
  return (
    <div className="flex h-[23px] items-center">
      <Grip />
      <label htmlFor="command" className="w-[49px] pl-[11px] font-bold">MEL</label>
      <input id="command" className={clsx(field, "h-[21px] w-[601px]")} />
      <output className="ml-1 h-[21px] flex-1 border-t-2 border-l-2 border-t-[#606060] border-l-[#606060] bg-[#949dab]" />
      <button type="button" aria-label="Script editor" className="mr-0.5 w-[18px] pl-0.5">
        <svg width="15" height="15" fill="none" stroke="#000" aria-hidden="true">
          <path d="M.5 1.500h13v12H.5zM1 2.500h12M1 7.500h12M3 5h3M8 5h3" />
        </svg>
      </button>
    </div>
  );
}

function Watermark() {
  return (
    <div className="pointer-events-none absolute right-1 bottom-[5px] flex items-end gap-[7px] opacity-80">
      <svg width="52" height="51" viewBox="0 0 52 51" fill="none" aria-hidden="true">
        <path d="M0 0h51v12H12v27h5v11H0z" fill="#3c7cc0" fillOpacity=".85" />
        <path d="M12 12h39v38H17V39h21V22H25v17H12z" fill="#6c9ccc" fillOpacity=".85" />
        <path d="M17 17h29v28H22M25 28h8v6M4 4l9 8v27H4" stroke="#c8dcf0" strokeWidth="1.500" />
        <circle cx="9" cy="9" r="4" fill="#e0ecf8" />
      </svg>
      <div className="flex flex-col items-center font-['Liberation_Sans','Noto_Sans_CJK_SC',sans-serif] text-[#70747a]">
        <span className="pb-0.5 text-[29px] leading-8 font-bold">
          <span className="text-[#5c94cc]">C</span>G时代
        </span>
        <span className="text-[13px] leading-3">
          www.<span className="text-[#5c94cc]">cg</span>time.com.cn
        </span>
      </div>
    </div>
  );
}

export default function App() {
  return (
    <div className="relative flex min-h-screen flex-col overflow-hidden bg-[#d4d0c8] font-['DejaVu_Sans_Condensed','DejaVu_Sans',sans-serif] text-[11px] leading-4 text-black">
      <div className="h-px bg-gradient-to-r from-[#1c3c80] to-[#a0c4f0]" />
      <MenuBar items={mainMenu} className="h-[21px] gap-3 pl-[6px]" />
      <StatusLine />
      <Shelf />
      <div className="flex flex-1">
        <Toolbox />
        <Viewport />
        <SidePanel />
      </div>
      <TimeSlider />
      <RangeSlider />
      <CommandLine />
      <Watermark />
    </div>
  );
}
